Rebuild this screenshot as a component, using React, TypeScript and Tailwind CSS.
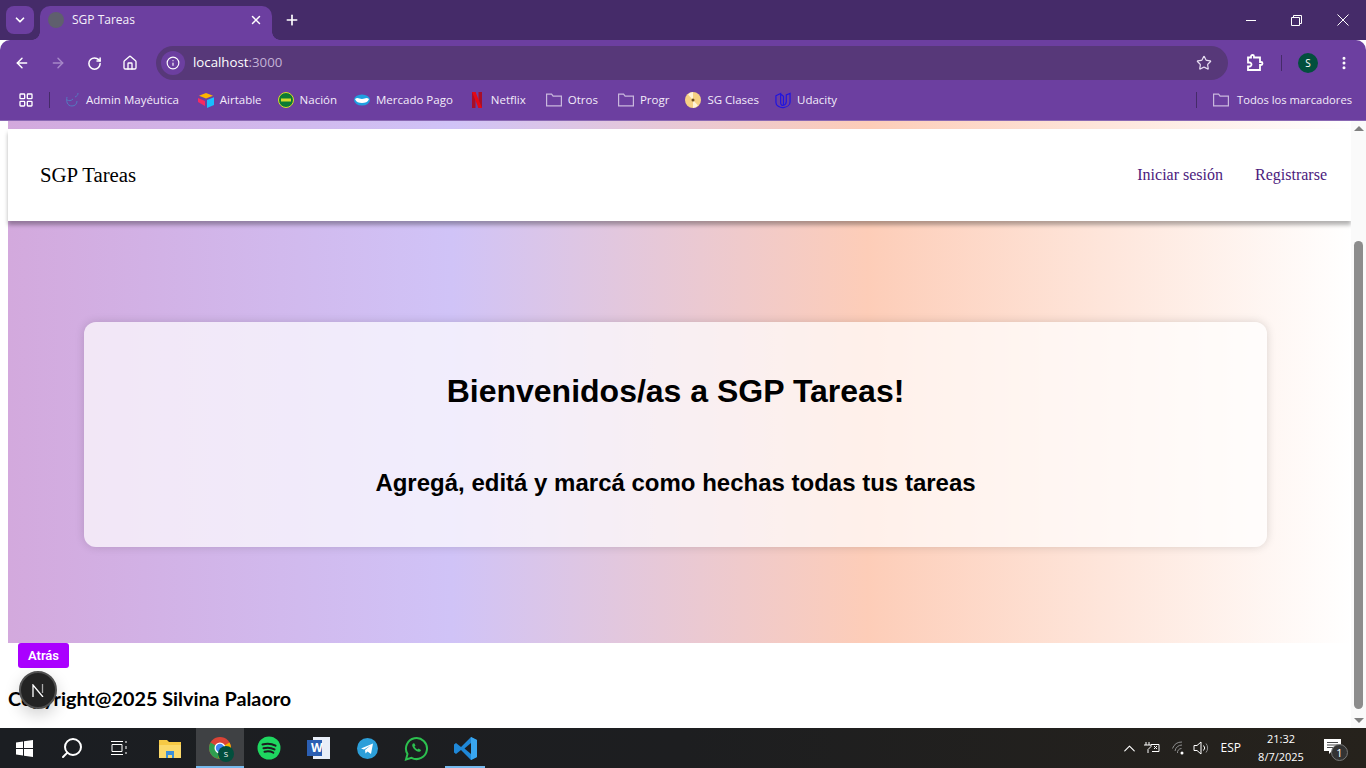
import { ArrowLeft, ArrowRight, RotateCw, Home, Info, Star, X, Plus, ChevronDown, LayoutGrid, EllipsisVertical, ChevronUp, Search } from "lucide-react";

const sans = "font-['Segoe_UI','Open_Sans','Noto_Sans',sans-serif]";

function Bookmark({ icon, label, className = "", labelClassName = "text-[11.5px]" }: { icon: React.ReactNode; label: string; className?: string; labelClassName?: string }) {
  return (
    <div className={`flex items-center gap-[6px] ${className}`}>
      <span className="flex h-4 w-4 items-center justify-center">{icon}</span>
      <span className={`leading-4 text-[#f3ecfa] ${labelClassName}`}>{label}</span>
    </div>
  );
}

const folder = (
  <svg width="16" height="14" viewBox="0 0 16 14" fill="none" stroke="#c9b8dd" strokeWidth="1.200">
    <path d="M.6 1.100h5l1.500 2h8.300v9.800H.6z" />
  </svg>
);

function Taskbar() {
  return (
    <div className={`flex h-10 w-full items-center bg-[linear-gradient(90deg,#1b1e22_0%,#1d1e20_50%,#26221c_100%)] text-white ${sans}`}>
      <div className="flex h-10 w-[48px] items-center justify-center">
        <svg width="17" height="17" viewBox="0 0 17 17" fill="#fff">
          <path d="M0 2.4 7 1.4v6.5H0zM8 1.3 17 0v7.9H8zM0 9h7v6.6L0 14.6zM8 9h9v8l-9-1.3z" />
        </svg>
      </div>
      <div className="flex h-10 w-[48px] items-center justify-center">
        <Search size={24} strokeWidth={2} className="-scale-x-100 text-white" />
      </div>
      <div className="flex h-10 w-[48px] items-center justify-center">
        <svg width="18" height="16" viewBox="0 0 18 16" fill="none" stroke="#fff" strokeWidth="1">
          <path d="M0 1.5h12M0 14.5h12M1 4.5h10v7H1zM15 1v2M15 6v3M15 12v2" />
        </svg>
      </div>
      <div className="flex h-10 w-[52px] items-center justify-center">
        <svg width="22" height="19" viewBox="0 0 22 19">
          <path d="M0 1h8l2 2h12v16H0z" fill="#f6c945" />
          <path d="M0 6h22v13H0z" fill="#fbd96a" />
          <path d="M7 12h8v7h-2v-3H9v3H7z" fill="#3c8fd8" />
        </svg>
      </div>
      <div className="relative flex h-10 w-12 items-center justify-center bg-[#3f4144]">
        <svg width="24" height="24" viewBox="0 0 24 24">
          <circle cx="12" cy="12" r="11" fill="#db4437" />
          <path d="M12 12 2.5 6.5A11 11 0 0 0 12 23l5-9z" fill="#2f9e4f" />
          <path d="M12 12 21.5 6.5A11 11 0 0 1 12 23l-2-2z" fill="#f4b400" />
          <circle cx="12" cy="12" r="5.5" fill="#fff" />
          <circle cx="12" cy="12" r="4.2" fill="#4285f4" />
        </svg>
        <span className="absolute left-[22px] top-[18px] flex h-[16px] w-[16px] items-center justify-center rounded-full bg-[#024f3d] text-[8px] text-white">S</span>
        <span className="absolute bottom-0 left-0 h-[2px] w-full bg-[#76b9ed]" />
      </div>
      <div className="flex h-10 w-[50px] items-center justify-center">
        <svg width="24" height="24" viewBox="0 0 24 24">
          <circle cx="12" cy="12" r="11.5" fill="#1ed760" />
          <path d="M5.5 8.5c4.5-1.300 9-1 13 1.200M6.500 12.300c3.800-1 7.500-.8 11 1.100M7.500 15.800c3-.8 6-.6 8.800.9" stroke="#1c1d20" strokeWidth="2" strokeLinecap="round" fill="none" />
        </svg>
      </div>
      <div className="relative flex h-10 w-[49px] items-center justify-center">
        <svg width="24" height="24" viewBox="0 0 24 24">
          <path d="M6 1h17v22H6z" fill="#e8eef8" />
          <path d="M0 4h15v16H0z" fill="#2b5fb3" />
        </svg>
        <span className="absolute left-[17px] top-[12px] text-[12px] font-bold leading-4 text-white">W</span>
      </div>
      <div className="flex h-10 w-[49px] items-center justify-center">
        <svg width="21" height="21" viewBox="0 0 21 21">
          <circle cx="10.500" cy="10.500" r="10.500" fill="#2c9fd9" />
          <path d="M4 10.500 16 5.500l-2 10.500-3.500-2.500-2 2-.5-3.500 5.500-4.500-6.500 4z" fill="#fff" />
        </svg>
      </div>
      <div className="flex h-10 w-[49px] items-center justify-center">
        <svg width="25" height="25" viewBox="0 0 25 25" fill="none">
          <path d="M2 23.500 3.500 18A10.500 10.500 0 1 1 7.500 21.800z" stroke="#2cc04f" strokeWidth="2" />
          <path d="M9 7.500c-1.300 1-1 3 .8 5.200 2 2.300 4 3.300 5.500 3 1-.2 1.700-1 1.700-1.800l-2.500-1.500-1 1c-1.300-.5-2.600-1.900-3-3l1-1L10.200 7.200z" fill="#2cc04f" />
        </svg>
      </div>
      <div className="relative ml-[4px] flex h-10 w-10 items-center justify-center">
        <svg width="25" height="25" viewBox="0 0 25 25">
          <path d="M18 1 24 4v17l-6 3-10-10-5 4-2-1.500v-8L3 7l5 4z" fill="#1f88d8" />
          <path d="M18 7 11.500 12.500 18 18z" fill="#1c1d20" />
          <path d="M18 1l6 3v17l-6 3z" fill="#39a6ef" />
        </svg>
        <span className="absolute bottom-0 left-0 h-[2px] w-full bg-[#76b9ed]" />
      </div>

      <div className="ml-auto flex h-10 items-center">
        <ChevronUp size={19} strokeWidth={1.4} className="mr-[4px] text-white" />
        <svg width="17" height="12" viewBox="0 0 17 12" fill="none" stroke="#fff" strokeWidth="1" className="mr-[12px]">
          <path d="M3 0v3M6 0v3M1 3h7v1.500L5 7.500V11M8 2.500h8v7H9M11 4l3 3M14 4l-3 3" />
        </svg>
        <svg width="15" height="14" viewBox="0 0 15 14" fill="none" stroke="#8f8f90" strokeWidth="1" className="mr-[6px]">
          <path d="M.5 7.500A10 10 0 0 1 10 1M3 10A7 7 0 0 1 10 4M5.500 12A4 4 0 0 1 9.500 7.500" />
          <circle cx="10" cy="12" r="1.500" fill="#fff" stroke="none" />
        </svg>
        <svg width="17" height="14" viewBox="0 0 17 14" fill="none" stroke="#fff" strokeWidth="1" className="mr-[11px]">
          <path d="M1 4.500h3L8 1v12L4 9.500H1zM10.500 4.500a3.500 3.500 0 0 1 0 5" />
          <path d="M13 2.500a7 7 0 0 1 0 9" stroke="#8f8f90" />
        </svg>
        <span className="mr-[17px] text-[12px] leading-4">ESP</span>
        <div className="mr-[19px] flex w-[46px] flex-col items-center text-[11px] leading-[18px]">
          <span>21:32</span>
          <span>8/7/2025</span>
        </div>
        <div className="relative mr-[19px] h-6 w-[24px]">
          <svg width="17" height="15" viewBox="0 0 17 15" fill="#fff" className="absolute left-[1px] top-[3px]">
            <path d="M0 0h17v12H8l-3 3v-3H0z" />
            <path d="M3 3.500h11M3 6h11M3 8.500h8" stroke="#1c1d20" strokeWidth=".8" />
          </svg>
          <span className="absolute left-[8px] top-[8px] flex h-[17px] w-[17px] items-center justify-center rounded-full border border-[#777] bg-[#333] text-[11px] leading-none text-white">1</span>
        </div>
      </div>
    </div>
  );
}

export default function App() {
  return (
    <div className="flex h-[768px] w-[1366px] flex-col overflow-hidden bg-white">
      {/* tab strip */}
      <div className={`relative flex h-10 shrink-0 items-end bg-[#452b69] pl-[6px] ${sans}`}>
        <div className="mb-[6px] flex h-[28px] w-[28px] items-center justify-center rounded-lg bg-[#6c3fa0]">
          <ChevronDown size={14} strokeWidth={3} className="text-white" />
        </div>
        <div className="relative ml-[6px] flex h-[34px] w-[232px] items-center rounded-t-[10px] bg-[#6c3fa0] pb-[6px] pl-2 pr-[9px]">
          <span className="h-4 w-4 rounded-full bg-[#5f5f6e]" />
          <span className="ml-[8px] text-[12px] text-[#f5f0fa]">SGP Tareas</span>
          <X size={14} strokeWidth={2.5} className="ml-auto text-white" />
          <span className="absolute bottom-0 left-full h-2 w-2 bg-[radial-gradient(circle_at_100%_0,transparent_7.5px,#6c3fa0_8px)]" />
          <span className="absolute bottom-0 right-full h-2 w-2 bg-[radial-gradient(circle_at_0_0,transparent_7.5px,#6c3fa0_8px)]" />
        </div>
        <Plus size={16} strokeWidth={2.5} className="mb-[12px] ml-[12px] text-white" />
        <div className="ml-auto mb-[6px] flex h-[28px] items-center text-white">
          <span className="mr-[35px] h-px w-[10px] bg-white" />
          <svg width="11" height="11" viewBox="0 0 11 11" fill="none" stroke="#fff" strokeWidth="1" className="mr-[35px]">
            <path d="M.5 2.500h8v8h-8zM2.500 2.500v-2h8v8h-2" />
          </svg>
          <svg width="12" height="12" viewBox="0 0 12 12" fill="none" stroke="#fff" strokeWidth="1" className="mr-[17px]">
            <path d="M.5.500l11 11M11.500.500l-11 11" />
          </svg>
        </div>
      </div>

      {/* toolbar */}
      <div className={`flex h-10 shrink-0 items-center rounded-tl-[10px] rounded-tr-[10px] bg-[#6c3fa0] pt-[6px] ${sans}`}>
        <ArrowLeft size={16} strokeWidth={2.2} className="ml-[14px] text-white" />
        <ArrowRight size={16} strokeWidth={2.2} className="ml-[20px] text-[#a688c8]" />
        <RotateCw size={15} strokeWidth={2.4} className="ml-[21px] text-white" />
        <Home size={16} strokeWidth={2} className="ml-[20px] text-white" />
        <div className="ml-[18px] flex h-[34px] w-[1072px] items-center rounded-full bg-[#573879] pl-[5px] pr-[16px]">
          <span className="flex h-6 w-6 items-center justify-center rounded-full bg-[#6c3fa0]">
            <Info size={14} strokeWidth={2} className="text-white" />
          </span>
          <span className="ml-[8px] text-[13.25px] text-white">
            localhost<span className="text-[#c3b2d6]">:3000</span>
          </span>
          <Star size={16} strokeWidth={1.8} className="ml-auto text-[#e6dcf0]" />
        </div>
        <svg width="18" height="18" viewBox="0 0 18 18" fill="none" stroke="#fff" strokeWidth="1.800" className="ml-[18px]">
          <path d="M2 3.500h3V2.500a1.500 1.500 0 0 1 3 0v1h6v4.500h1a1.500 1.500 0 0 1 0 3h-1v5H2v-3.500h1.500a2 2 0 0 0 0-4H2z" />
        </svg>
        <span className="ml-[17px] h-4 w-px bg-[#452b69]" />
        <span className="ml-[16px] flex h-5 w-5 items-center justify-center rounded-full bg-[#024f3d] text-[10px] text-white">S</span>
        <EllipsisVertical size={16} strokeWidth={2.5} className="ml-[18px] text-white" />
      </div>

      {/* bookmarks */}
      <div className={`flex h-[41px] shrink-0 items-center border-b border-[#8a68b3] bg-[#6c3fa0] pl-[18px] pr-[14px] ${sans}`}>
        <LayoutGrid size={16} strokeWidth={2} className="text-white" />
        <span className="ml-[15px] mr-[14px] h-4 w-px bg-[#452b69]" />
        <Bookmark
          label="Admin Mayéutica"
          className="mr-[19px]"
          icon={
            <svg width="16" height="16" viewBox="0 0 16 16" fill="none" stroke="#5579c0" strokeWidth="1">
              <path d="M14 1c0 2-1 3-3 4M3 5c-1 4 0 9 5 9 3 0 5-2 5-5M3 8c2 1 4 1 6-1" />
            </svg>
          }
        />
        <Bookmark
          label="Airtable"
          className="mr-[16px]"
          icon={
            <svg width="16" height="15" viewBox="0 0 16 15">
              <path d="M8 0l7 2.800-7 2.800L1 2.800z" fill="#fcb400" />
              <path d="M9 7l7-2.700V12l-7 3z" fill="#18bfff" />
              <path d="M0 5l7 3v5L0 9z" fill="#f82b60" />
            </svg>
          }
        />
        <Bookmark
          label="Nación"
          className="mr-[17px]"
          icon={
            <svg width="16" height="16" viewBox="0 0 16 16">
              <circle cx="8" cy="8" r="7.500" fill="#0c7a32" stroke="#d6dc2a" strokeWidth="1" />
              <rect x="3" y="6.500" width="10" height="3" fill="#d6dc2a" />
            </svg>
          }
        />
        <Bookmark
          label="Mercado Pago"
          className="mr-[16px]"
          icon={
            <svg width="16" height="12" viewBox="0 0 16 12">
              <ellipse cx="8" cy="6" rx="8" ry="5.500" fill="#1f9fe0" />
              <path d="M1 5c3-2 4 0 7 0s4-2 7 0c-1 3-4 4-7 4S2 8 1 5z" fill="#fff" />
            </svg>
          }
        />
        <Bookmark
          label="Netflix"
          className="mr-[20px]"
          icon={
            <svg width="10" height="16" viewBox="0 0 10 16">
              <path d="M0 0h3.500v16L0 16z" fill="#a80e28" />
              <path d="M6.500 0H10v16H6.500z" fill="#a80e28" />
              <path d="M0 0h3.500L10 16H6.500z" fill="#e50914" />
            </svg>
          }
        />
        <Bookmark label="Otros" className="mr-[20px]" icon={folder} />
        <Bookmark label="Progr" className="mr-[16px]" icon={folder} />
        <Bookmark
          label="SG Clases"
          className="mr-[16px]"
          icon={
            <svg width="16" height="16" viewBox="0 0 16 16">
              <circle cx="8" cy="8" r="8" fill="#f7d184" />
              <path d="M8 8 3 2.500A8 8 0 0 1 8 0zM8 8l5 5.500A8 8 0 0 1 8 16z" fill="#fff3d6" />
              <circle cx="8" cy="8" r="1.500" fill="#6e4d1e" />
            </svg>
          }
        />
        <Bookmark
          label="Udacity"
          icon={
            <svg width="17" height="17" viewBox="0 0 17 17" fill="none" stroke="#2015e0" strokeWidth="1.300">
              <path d="M1 3.500 6 1v10c0 2 1.500 3 3 2.500 2.500-.8 3-2 3-4V2.500L16 1v9c0 3-3 5.500-7 6-4 .3-8-2-8-5.500zM6 1.500 9 4v9M12 2.500" />
            </svg>
          }
        />
        <span className="ml-auto mr-[16px] h-4 w-px bg-[#452b69]" />
        <Bookmark label="Todos los marcadores" labelClassName="ml-[2px] text-[11.2px]" icon={folder} />
      </div>

      {/* page viewport */}
      <div className="relative flex min-h-0 flex-1">
        <div className="min-w-0 flex-1 pl-2">
          <div className="h-[522px] bg-[linear-gradient(90deg,#d3a9dd_0%,#d0c3f7_33%,#fdcdb8_64%,#ffffff_100%)] pt-2">
            <nav className="flex h-[92px] items-center justify-between bg-white pl-8 pr-6 shadow-[0_4px_4px_rgba(0,0,0,0.3)]">
              <span className="font-['Liberation_Serif',serif] text-[20.8px] text-black">SGP Tareas</span>
              <div className="flex gap-8 font-['Liberation_Serif',serif] text-[16px] text-[#4b1a7d]">
                <span>Iniciar sesión</span>
                <span>Registrarse</span>
              </div>
            </nav>
            <div className="ml-[76px] mr-[84px] mt-[101px] flex h-[225px] flex-col items-center rounded-xl bg-white/70 font-['Liberation_Sans',sans-serif] font-bold text-black shadow-[0_0_10px_rgba(0,0,0,0.15)]">
              <h1 className="mt-[47px] text-[32px] leading-[44px]">Bienvenidos/as a SGP Tareas!</h1>
              <h2 className="mt-[56px] text-[24px] leading-7">Agregá, editá y marcá como hechas todas tus tareas</h2>
            </div>
          </div>
          <button className="ml-[10px] block h-[25px] w-[51px] rounded-[3px] bg-[#aa00ff] font-['Roboto',sans-serif] text-[13px] font-semibold text-white">
            Atrás
          </button>
          <p className="mt-[18px] font-['Lato',sans-serif] text-[19.8px] font-bold leading-[24px] text-black">Copyright@2025 Silvina Palaoro</p>
        </div>

        {/* scrollbar */}
        <div className="flex w-[15px] shrink-0 flex-col items-center bg-[#fafafa]">
          <span className="mt-[5px] h-0 w-0 border-x-[5px] border-b-[5px] border-x-transparent border-b-[#7f7f7f]" />
          <span className="mt-[110px] h-[468px] w-[9px] rounded-full bg-[#8c8c8c]" />
          <span className="mt-auto mb-[5px] h-0 w-0 border-x-[5px] border-t-[5px] border-x-transparent border-t-[#7f7f7f]" />
        </div>

        {/* next.js dev badge */}
        <div className="absolute left-[19px] top-[550px] flex h-[38px] w-[38px] items-center justify-center rounded-full border-2 border-[#505050] bg-[#232323] shadow-[0_6px_16px_rgba(0,0,0,0.18)]">
          <svg width="12" height="13" viewBox="0 0 12 13" fill="none">
            <path d="M1 13V1l10 12" stroke="#fff" strokeWidth="1.300" />
            <path d="M10.500 0v9" stroke="#aaa" strokeWidth="1.300" />
          </svg>
        </div>
      </div>

      <Taskbar />
    </div>
  );
}
